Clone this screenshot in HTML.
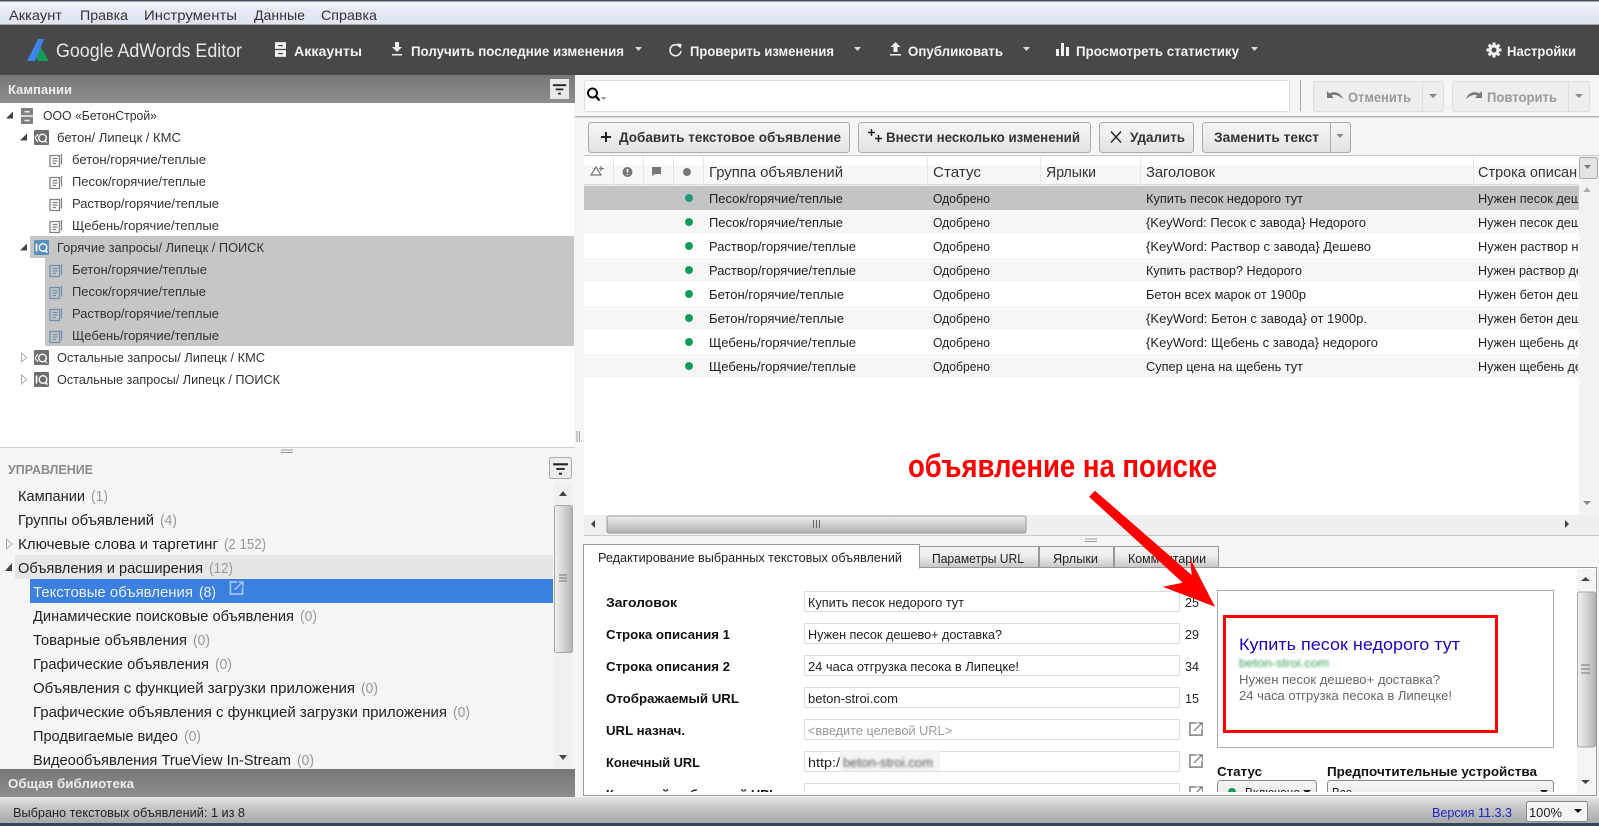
<!DOCTYPE html>
<html lang="ru"><head><meta charset="utf-8"><title>Google AdWords Editor</title>
<style>
html,body{margin:0;padding:0;background:#f5f5f5;overflow:hidden}
svg{display:block}
text{font-family:"Liberation Sans","DejaVu Sans",sans-serif;font-size:13px;fill:#222;white-space:pre}
.m{font-size:14px;fill:#333}
.w{font-size:13.5px;font-weight:bold;fill:#f2f2f2}
.h{font-size:13px;font-weight:bold;fill:#eee}
.l{font-size:15px;fill:#222}
.c{font-size:15px;fill:#999}
.b{font-size:13.5px;font-weight:bold;fill:#333}
.d{font-size:13.5px;font-weight:bold;fill:#999}
.gh{font-size:15px;fill:#333}
.f{font-size:13px;font-weight:bold;fill:#111}
.i{font-size:13px;fill:#222}
.tb{font-size:13px;fill:#333}
</style></head><body>
<svg xmlns="http://www.w3.org/2000/svg" width="1599" height="826" viewBox="0 0 1599 826">
<defs>
<linearGradient id="menu" x1="0" y1="0" x2="0" y2="1"><stop offset="0" stop-color="#fbfcfe"/><stop offset=".4" stop-color="#e4e9f5"/><stop offset="1" stop-color="#dfe4f2"/></linearGradient>
<linearGradient id="hd" x1="0" y1="0" x2="0" y2="1"><stop offset="0" stop-color="#777"/><stop offset="1" stop-color="#8e8e8e"/></linearGradient>
<linearGradient id="st" x1="0" y1="0" x2="0" y2="1"><stop offset="0" stop-color="#e6e6e6"/><stop offset=".45" stop-color="#c4c4c4"/><stop offset="1" stop-color="#a9a9a9"/></linearGradient>
<linearGradient id="btn" x1="0" y1="0" x2="0" y2="1"><stop offset="0" stop-color="#f6f6f6"/><stop offset="1" stop-color="#e2e2e2"/></linearGradient>
<linearGradient id="tab" x1="0" y1="0" x2="0" y2="1"><stop offset="0" stop-color="#f6f6f6"/><stop offset=".5" stop-color="#ebebeb"/><stop offset="1" stop-color="#c6c6c6"/></linearGradient>
<linearGradient id="thv" x1="0" y1="0" x2="1" y2="0"><stop offset="0" stop-color="#f2f2f2"/><stop offset="1" stop-color="#b4b4b4"/></linearGradient>
<linearGradient id="thh" x1="0" y1="0" x2="0" y2="1"><stop offset="0" stop-color="#f0f0f0"/><stop offset="1" stop-color="#b0b0b0"/></linearGradient>
<filter id="bl" x="-10%" y="-50%" width="120%" height="200%"><feGaussianBlur stdDeviation="1.3"/></filter>
<clipPath id="gridclip"><rect x="584" y="156" width="994" height="358"/></clipPath>
<clipPath id="panelclip"><rect x="584" y="569" width="1012" height="223"/></clipPath>
<symbol id="doc" viewBox="0 -1 15 15" overflow="visible"><path d="M1 2.500h9.500v11H1zM3.500 5.500h5M3.500 8h5M3.500 10.500h3.500" fill="none" stroke="currentColor" stroke-width="1.300"/><path d="M12.500 1v10.500" fill="none" stroke="currentColor" stroke-width="1.200"/></symbol>
<symbol id="campA" viewBox="0 0 15 15"><rect width="15" height="15" rx="1" fill="currentColor"/><circle cx="8.500" cy="8" r="3.800" fill="none" stroke="#fff" stroke-width="1.400"/><path d="M10.500 10.500l2.500 2.500M1 8l3-4M1 8l3 4" stroke="#fff" stroke-width="1.100" fill="none"/></symbol>
<symbol id="campS" viewBox="0 0 15 15"><rect width="15" height="15" rx="1" fill="currentColor"/><circle cx="9" cy="7.500" r="3.800" fill="none" stroke="#fff" stroke-width="1.400"/><path d="M11 10l2.500 2.500M2.500 3.500v8" stroke="#fff" stroke-width="1.600" fill="none"/></symbol>
<symbol id="cab" viewBox="0 0 12 16"><rect width="12" height="7.300" fill="currentColor"/><rect y="8.700" width="12" height="7.300" fill="currentColor"/><path d="M3.500 3h5v1.500h-5zM3.500 11.700h5v1.500h-5z" fill="#484848"/></symbol>
<symbol id="cab2" viewBox="0 0 12 16"><rect width="12" height="7.300" fill="currentColor"/><rect y="8.700" width="12" height="7.300" fill="currentColor"/><path d="M3.500 3h5v1.500h-5zM3.500 11.700h5v1.500h-5z" fill="#eee"/></symbol>
<symbol id="ext" viewBox="0 0 15 15"><path d="M8 1H1v13h13V7" fill="none" stroke="currentColor" stroke-width="1.700"/><path d="M5.500 9.500L13.500 1.500M9.500 1h5v5" fill="none" stroke="currentColor" stroke-width="1.500"/></symbol>
<symbol id="flt" viewBox="0 0 20 20"><path d="M3 5h14v2H3zM6 9.500h8v1.800H6zM8.500 14h3v1.800h-3z" fill="#222"/></symbol>
</defs>

<rect width="1599" height="826" fill="#f5f5f5"/>

<!-- title / menu -->
<rect width="1599" height="25" fill="url(#menu)"/>
<rect width="1599" height="1.500" fill="#3f4e5e"/>
<rect y="24" width="1599" height="1" fill="#a8a8a8"/>
<text class="m" x="9" y="20" textLength="53" lengthAdjust="spacingAndGlyphs">Аккаунт</text>
<text class="m" x="80" y="20" textLength="48" lengthAdjust="spacingAndGlyphs">Правка</text>
<text class="m" x="144" y="20" textLength="93" lengthAdjust="spacingAndGlyphs">Инструменты</text>
<text class="m" x="254" y="20" textLength="51" lengthAdjust="spacingAndGlyphs">Данные</text>
<text class="m" x="321" y="20" textLength="56" lengthAdjust="spacingAndGlyphs">Справка</text>

<!-- toolbar -->
<rect y="25" width="1599" height="50" fill="#484848"/>
<path d="M40 46l9 15H38l-3-7z" fill="#169c58"/><path d="M27 61L38 39h6L35 61z" fill="#3f83ee"/>
<text x="56" y="57" textLength="186" lengthAdjust="spacingAndGlyphs" style="font-size:19px;fill:#e6e6e6">Google AdWords Editor</text>
<use href="#cab" x="275" y="42" width="11" height="15" color="#f2f2f2"/>
<text class="w" x="294" y="56" textLength="68" lengthAdjust="spacingAndGlyphs">Аккаунты</text>
<path d="M395 42h4v5h3l-5 5-5-5h3zM392 54h10v1.500h-10z" fill="#f0f0f0"/>
<text class="w" x="411" y="56" textLength="213" lengthAdjust="spacingAndGlyphs">Получить последние изменения</text>
<path d="M635 47h7l-3.500 4z" fill="#ddd"/>
<path d="M680 47a5.500 5.500 0 1 0 1 4" fill="none" stroke="#f0f0f0" stroke-width="1.600"/><path d="M677 43.500l4.500 .5-.5 4.500z" fill="#f0f0f0"/>
<text class="w" x="690" y="56" textLength="144" lengthAdjust="spacingAndGlyphs">Проверить изменения</text>
<path d="M854 47h7l-3.500 4z" fill="#ddd"/>
<path d="M893.500 52h4v-5h3l-5-5-5 5h3zM890 54h11v1.500h-11z" fill="#f0f0f0"/>
<text class="w" x="908" y="56" textLength="95" lengthAdjust="spacingAndGlyphs">Опубликовать</text>
<path d="M1023 47h7l-3.500 4z" fill="#ddd"/>
<path d="M1056 49h3v7h-3zM1061 43h3v13h-3zM1066 47h3v9h-3z" fill="#f0f0f0"/>
<text class="w" x="1076" y="56" textLength="163" lengthAdjust="spacingAndGlyphs">Просмотреть статистику</text>
<path d="M1251 47h7l-3.500 4z" fill="#ddd"/>
<path d="M1494 42.500v15M1486.500 50h15M1488.700 44.700l10.600 10.600M1499.300 44.700l-10.600 10.600" stroke="#f2f2f2" stroke-width="3"/><circle cx="1494" cy="50" r="5.500" fill="#f2f2f2"/><circle cx="1494" cy="50" r="2.500" fill="#484848"/>
<text class="w" x="1507" y="56" textLength="69" lengthAdjust="spacingAndGlyphs">Настройки</text>

<!-- left: campaign tree -->
<rect y="75" width="575" height="28" fill="url(#hd)"/>
<text class="h" x="8" y="94" textLength="64" lengthAdjust="spacingAndGlyphs">Кампании</text>
<rect x="550" y="79" width="19" height="20" fill="#e8e8e8"/>
<use href="#flt" x="550" y="79" width="19" height="20"/>
<rect y="103" width="574" height="344" fill="#fff"/>
<rect y="447" width="575" height="1" fill="#ccc"/>
<rect x="30" y="236" width="544" height="22" fill="#c6c6c6"/>
<rect x="45" y="258" width="529" height="88" fill="#c6c6c6"/>

<path d="M13 111.500v7h-7z" fill="#444"/>
<use href="#cab2" x="21" y="108" width="12" height="16" color="#808080"/>
<text class="tb" x="43" y="120" textLength="114" lengthAdjust="spacingAndGlyphs">ООО «БетонСтрой»</text>
<path d="M27 133.500v7h-7z" fill="#444"/>
<use href="#campA" x="34" y="130" width="15" height="15" color="#6e6e6e"/>
<text class="tb" x="57" y="142" textLength="124" lengthAdjust="spacingAndGlyphs">бетон/ Липецк / КМС</text>
<use href="#doc" x="49" y="152" width="15" height="15" color="#808080"/>
<text class="tb" x="72" y="164" textLength="134" lengthAdjust="spacingAndGlyphs">бетон/горячие/теплые</text>
<use href="#doc" x="49" y="174" width="15" height="15" color="#808080"/>
<text class="tb" x="72" y="186" textLength="134" lengthAdjust="spacingAndGlyphs">Песок/горячие/теплые</text>
<use href="#doc" x="49" y="196" width="15" height="15" color="#808080"/>
<text class="tb" x="72" y="208" textLength="147" lengthAdjust="spacingAndGlyphs">Раствор/горячие/теплые</text>
<use href="#doc" x="49" y="218" width="15" height="15" color="#808080"/>
<text class="tb" x="72" y="230" textLength="147" lengthAdjust="spacingAndGlyphs">Щебень/горячие/теплые</text>
<path d="M27 243.500v7h-7z" fill="#444"/>
<use href="#campS" x="34" y="240" width="15" height="15" color="#5b8fbd"/>
<text class="tb" x="57" y="252" textLength="207" lengthAdjust="spacingAndGlyphs">Горячие запросы/ Липецк / ПОИСК</text>
<use href="#doc" x="49" y="262" width="15" height="15" color="#6f8fae"/>
<text class="tb" x="72" y="274" textLength="135" lengthAdjust="spacingAndGlyphs">Бетон/горячие/теплые</text>
<use href="#doc" x="49" y="284" width="15" height="15" color="#6f8fae"/>
<text class="tb" x="72" y="296" textLength="134" lengthAdjust="spacingAndGlyphs">Песок/горячие/теплые</text>
<use href="#doc" x="49" y="306" width="15" height="15" color="#6f8fae"/>
<text class="tb" x="72" y="318" textLength="147" lengthAdjust="spacingAndGlyphs">Раствор/горячие/теплые</text>
<use href="#doc" x="49" y="328" width="15" height="15" color="#6f8fae"/>
<text class="tb" x="72" y="340" textLength="147" lengthAdjust="spacingAndGlyphs">Щебень/горячие/теплые</text>
<path d="M21.500 353v9l5-4.500z" fill="#fff" stroke="#aaa"/>
<use href="#campA" x="34" y="350" width="15" height="15" color="#6e6e6e"/>
<text class="tb" x="57" y="362" textLength="208" lengthAdjust="spacingAndGlyphs">Остальные запросы/ Липецк / КМС</text>
<path d="M21.500 375v9l5-4.500z" fill="#fff" stroke="#aaa"/>
<use href="#campS" x="34" y="372" width="15" height="15" color="#6e6e6e"/>
<text class="tb" x="57" y="384" textLength="223" lengthAdjust="spacingAndGlyphs">Остальные запросы/ Липецк / ПОИСК</text>

<path d="M281 450h12M281 452.500h12" stroke="#999" stroke-width="1"/>
<path d="M577 431v11M579.500 431v11" stroke="#999" stroke-width="1"/>

<!-- left: manage -->
<text x="8" y="474" textLength="85" lengthAdjust="spacingAndGlyphs" style="font-size:13px;font-weight:bold;fill:#8a8a8a">УПРАВЛЕНИЕ</text>
<rect x="549.500" y="457.500" width="22" height="21" rx="2" fill="#ececec" stroke="#aaa"/>
<use href="#flt" x="550" y="458" width="21" height="21"/>
<rect x="15" y="555" width="538" height="24" fill="#e6e6e6"/>
<rect x="30" y="579" width="523" height="24" fill="#3b7fdf"/>
<text class="l" x="18" y="501" textLength="67" lengthAdjust="spacingAndGlyphs">Кампании</text><text class="c" x="91" y="501" textLength="17" lengthAdjust="spacingAndGlyphs">(1)</text>
<text class="l" x="18" y="525" textLength="136" lengthAdjust="spacingAndGlyphs">Группы объявлений</text><text class="c" x="160" y="525" textLength="17" lengthAdjust="spacingAndGlyphs">(4)</text>
<path d="M6.500 539v10l5.500-5z" fill="#fff" stroke="#aaa"/>
<text class="l" x="18" y="549" textLength="200" lengthAdjust="spacingAndGlyphs">Ключевые слова и таргетинг</text><text class="c" x="224" y="549" textLength="42" lengthAdjust="spacingAndGlyphs">(2 152)</text>
<path d="M12 563v8h-7z" fill="#444"/>
<text class="l" x="18" y="573" textLength="185" lengthAdjust="spacingAndGlyphs">Объявления и расширения</text><text class="c" x="209" y="573" textLength="24" lengthAdjust="spacingAndGlyphs">(12)</text>
<text class="l" x="33" y="597" textLength="160" lengthAdjust="spacingAndGlyphs" style="fill:#eaf1fb">Текстовые объявления</text><text class="l" x="199" y="597" textLength="17" lengthAdjust="spacingAndGlyphs" style="fill:#eaf1fb">(8)</text>
<use href="#ext" x="229" y="581" width="15" height="14" color="#a9c8f2"/>
<text class="l" x="33" y="621" textLength="261" lengthAdjust="spacingAndGlyphs">Динамические поисковые объявления</text><text class="c" x="300" y="621" textLength="17" lengthAdjust="spacingAndGlyphs">(0)</text>
<text class="l" x="33" y="645" textLength="154" lengthAdjust="spacingAndGlyphs">Товарные объявления</text><text class="c" x="193" y="645" textLength="17" lengthAdjust="spacingAndGlyphs">(0)</text>
<text class="l" x="33" y="669" textLength="176" lengthAdjust="spacingAndGlyphs">Графические объявления</text><text class="c" x="215" y="669" textLength="17" lengthAdjust="spacingAndGlyphs">(0)</text>
<text class="l" x="33" y="693" textLength="322" lengthAdjust="spacingAndGlyphs">Объявления с функцией загрузки приложения</text><text class="c" x="361" y="693" textLength="17" lengthAdjust="spacingAndGlyphs">(0)</text>
<text class="l" x="33" y="717" textLength="414" lengthAdjust="spacingAndGlyphs">Графические объявления с функцией загрузки приложения</text><text class="c" x="453" y="717" textLength="17" lengthAdjust="spacingAndGlyphs">(0)</text>
<text class="l" x="33" y="741" textLength="145" lengthAdjust="spacingAndGlyphs">Продвигаемые видео</text><text class="c" x="184" y="741" textLength="17" lengthAdjust="spacingAndGlyphs">(0)</text>
<text class="l" x="33" y="765" textLength="258" lengthAdjust="spacingAndGlyphs">Видеообъявления TrueView In-Stream</text><text class="c" x="297" y="765" textLength="17" lengthAdjust="spacingAndGlyphs">(0)</text>
<rect x="554" y="483" width="18" height="286" fill="#f0f0f0"/>
<path d="M559 496h8l-4-5z" fill="#444"/><path d="M559 755h8l-4 5z" fill="#444"/>
<rect x="554.500" y="505.500" width="18" height="147" rx="2" fill="url(#thv)" stroke="#a8a8a8"/>
<path d="M559 575h8M559 578h8M559 581h8" stroke="#777"/>
<rect y="769" width="575" height="28" fill="url(#hd)"/>
<text class="h" x="8" y="788" textLength="126" lengthAdjust="spacingAndGlyphs">Общая библиотека</text>

<!-- top-right controls -->
<rect x="584.500" y="80.500" width="705" height="31" rx="2" fill="#fff" stroke="#ddd"/>
<circle cx="592.500" cy="93" r="4.500" fill="none" stroke="#111" stroke-width="2"/><path d="M596 96.500l3.500 4" stroke="#111" stroke-width="2.400"/><path d="M600.500 97h6l-3 3z" fill="#999"/>
<rect x="1300" y="80" width="1" height="31" fill="#aaa"/>
<rect x="1313.500" y="81.500" width="130" height="30" rx="2" fill="#eee" stroke="#ddd"/><rect x="1422" y="81" width="1" height="30" fill="#ddd"/>
<path d="M1327 91v7h7l-2.500-2.500c3-1.500 7-.5 11.500 3.500-1.500-5.500-8-9-13.500-5.500z" fill="#777"/>
<text class="d" x="1348" y="102" textLength="63" lengthAdjust="spacingAndGlyphs">Отменить</text>
<path d="M1429 94h8l-4 4z" fill="#888"/>
<rect x="1452.500" y="81.500" width="137" height="30" rx="2" fill="#eee" stroke="#ddd"/><rect x="1568" y="81" width="1" height="30" fill="#ddd"/>
<path transform="translate(2809,0) scale(-1,1)" d="M1327 91v7h7l-2.500-2.500c3-1.500 7-.5 11.500 3.500-1.500-5.500-8-9-13.500-5.500z" fill="#777"/>
<text class="d" x="1487" y="102" textLength="70" lengthAdjust="spacingAndGlyphs">Повторить</text>
<path d="M1575 94h8l-4 4z" fill="#888"/>
<rect x="575" y="116" width="1024" height="1.500" fill="#b4b4b4"/>

<rect x="588.500" y="122.500" width="261" height="30" rx="3" fill="url(#btn)" stroke="#aaa"/>
<path d="M606 132v10M601 137h10" stroke="#222" stroke-width="2"/>
<text class="b" x="619" y="142" textLength="222" lengthAdjust="spacingAndGlyphs">Добавить текстовое объявление</text>
<rect x="858.500" y="122.500" width="232" height="30" rx="3" fill="url(#btn)" stroke="#aaa"/>
<path d="M871.500 129v7M868 132.500h7M878.500 135v7M875 138.500h7" stroke="#222" stroke-width="1.500"/>
<text class="b" x="886" y="142" textLength="194" lengthAdjust="spacingAndGlyphs">Внести несколько изменений</text>
<rect x="1099.500" y="122.500" width="94" height="30" rx="3" fill="url(#btn)" stroke="#aaa"/>
<path d="M1111 131.500l10 11M1121 131.500l-10 11" stroke="#222" stroke-width="1.400"/>
<text class="b" x="1130" y="142" textLength="55" lengthAdjust="spacingAndGlyphs">Удалить</text>
<rect x="1202.500" y="122.500" width="148" height="30" rx="3" fill="url(#btn)" stroke="#aaa"/><rect x="1330" y="123" width="1" height="29" fill="#aaa"/>
<text class="b" x="1214" y="142" textLength="105" lengthAdjust="spacingAndGlyphs">Заменить текст</text>
<path d="M1336.500 134h7l-3.500 4z" fill="#888"/>

<!-- grid -->
<rect x="584" y="155" width="1015" height="1" fill="#c8c8c8"/>
<rect x="584" y="156" width="995" height="359" fill="#fff"/>
<rect x="584" y="165" width="995" height="20" fill="#f7f7f7"/>
<rect x="584" y="184" width="995" height="1.500" fill="#ddd"/>
<path d="M613.500 156v29M643.500 156v29M673.500 156v29M703.500 156v29M927.500 156v29M1040.500 156v29M1140.500 156v29M1473.500 156v29" stroke="#e6e6e6"/>
<rect x="584" y="186" width="995" height="24" fill="#c4c4c4"/>
<rect x="584" y="210" width="995" height="24" fill="#f6f6f6"/>
<rect x="584" y="258" width="995" height="24" fill="#f6f6f6"/>
<rect x="584" y="306" width="995" height="24" fill="#f6f6f6"/>
<rect x="584" y="354" width="995" height="24" fill="#f6f6f6"/>
<path d="M591 175l5-8 5 8zM601 166v5M599 168.500h5" fill="none" stroke="#777" stroke-width="1.200"/>
<circle cx="627.500" cy="172" r="5" fill="#777"/><path d="M627.500 169v3.500M627.500 174v1" stroke="#fff" stroke-width="1.500"/>
<path d="M652 167h9v7h-6l-3 2z" fill="#777"/>
<circle cx="687" cy="172" r="4" fill="#777"/>
<g clip-path="url(#gridclip)">
<text class="gh" x="709" y="177" textLength="134" lengthAdjust="spacingAndGlyphs">Группа объявлений</text>
<text class="gh" x="933" y="177" textLength="48" lengthAdjust="spacingAndGlyphs">Статус</text>
<text class="gh" x="1046" y="177" textLength="50" lengthAdjust="spacingAndGlyphs">Ярлыки</text>
<text class="gh" x="1146" y="177" textLength="69" lengthAdjust="spacingAndGlyphs">Заголовок</text>
<text class="gh" x="1478" y="177" textLength="115" lengthAdjust="spacingAndGlyphs">Строка описания</text>

<circle cx="689" cy="198" r="4" fill="#1d9a7c"/><circle cx="689" cy="222" r="4" fill="#149c5a"/><circle cx="689" cy="246" r="4" fill="#149c5a"/><circle cx="689" cy="270" r="4" fill="#149c5a"/><circle cx="689" cy="294" r="4" fill="#149c5a"/><circle cx="689" cy="318" r="4" fill="#149c5a"/><circle cx="689" cy="342" r="4" fill="#149c5a"/><circle cx="689" cy="366" r="4" fill="#149c5a"/>

<text x="709" y="203" textLength="134" lengthAdjust="spacingAndGlyphs">Песок/горячие/теплые</text><text x="933" y="203" textLength="57" lengthAdjust="spacingAndGlyphs">Одобрено</text><text x="1146" y="203" textLength="157" lengthAdjust="spacingAndGlyphs">Купить песок недорого тут</text><text x="1478" y="203" textLength="195" lengthAdjust="spacingAndGlyphs">Нужен песок дешево+ доставка?</text>
<text x="709" y="227" textLength="134" lengthAdjust="spacingAndGlyphs">Песок/горячие/теплые</text><text x="933" y="227" textLength="57" lengthAdjust="spacingAndGlyphs">Одобрено</text><text x="1146" y="227" textLength="220" lengthAdjust="spacingAndGlyphs">{KeyWord: Песок с завода} Недорого</text><text x="1478" y="227" textLength="195" lengthAdjust="spacingAndGlyphs">Нужен песок дешево+ доставка?</text>
<text x="709" y="251" textLength="147" lengthAdjust="spacingAndGlyphs">Раствор/горячие/теплые</text><text x="933" y="251" textLength="57" lengthAdjust="spacingAndGlyphs">Одобрено</text><text x="1146" y="251" textLength="225" lengthAdjust="spacingAndGlyphs">{KeyWord: Раствор с завода} Дешево</text><text x="1478" y="251" textLength="155" lengthAdjust="spacingAndGlyphs">Нужен раствор недорого?</text>
<text x="709" y="275" textLength="147" lengthAdjust="spacingAndGlyphs">Раствор/горячие/теплые</text><text x="933" y="275" textLength="57" lengthAdjust="spacingAndGlyphs">Одобрено</text><text x="1146" y="275" textLength="156" lengthAdjust="spacingAndGlyphs">Купить раствор? Недорого</text><text x="1478" y="275" textLength="205" lengthAdjust="spacingAndGlyphs">Нужен раствор дешево+ доставка?</text>
<text x="709" y="299" textLength="135" lengthAdjust="spacingAndGlyphs">Бетон/горячие/теплые</text><text x="933" y="299" textLength="57" lengthAdjust="spacingAndGlyphs">Одобрено</text><text x="1146" y="299" textLength="160" lengthAdjust="spacingAndGlyphs">Бетон всех марок от 1900р</text><text x="1478" y="299" textLength="195" lengthAdjust="spacingAndGlyphs">Нужен бетон дешево+ доставка?</text>
<text x="709" y="323" textLength="135" lengthAdjust="spacingAndGlyphs">Бетон/горячие/теплые</text><text x="933" y="323" textLength="57" lengthAdjust="spacingAndGlyphs">Одобрено</text><text x="1146" y="323" textLength="221" lengthAdjust="spacingAndGlyphs">{KeyWord: Бетон с завода} от 1900р.</text><text x="1478" y="323" textLength="195" lengthAdjust="spacingAndGlyphs">Нужен бетон дешево+ доставка?</text>
<text x="709" y="347" textLength="147" lengthAdjust="spacingAndGlyphs">Щебень/горячие/теплые</text><text x="933" y="347" textLength="57" lengthAdjust="spacingAndGlyphs">Одобрено</text><text x="1146" y="347" textLength="232" lengthAdjust="spacingAndGlyphs">{KeyWord: Щебень с завода} недорого</text><text x="1478" y="347" textLength="205" lengthAdjust="spacingAndGlyphs">Нужен щебень дешево+ доставка?</text>
<text x="709" y="371" textLength="147" lengthAdjust="spacingAndGlyphs">Щебень/горячие/теплые</text><text x="933" y="371" textLength="57" lengthAdjust="spacingAndGlyphs">Одобрено</text><text x="1146" y="371" textLength="157" lengthAdjust="spacingAndGlyphs">Супер цена на щебень тут</text><text x="1478" y="371" textLength="205" lengthAdjust="spacingAndGlyphs">Нужен щебень дешево+ доставка?</text>
</g>
<rect x="1579" y="156" width="20" height="359" fill="#f2f2f2"/>
<rect x="1579.500" y="157.500" width="18" height="21" rx="2" fill="#e4e4e4" stroke="#aaa"/>
<path d="M1584 165h7l-3.500 4z" fill="#777"/>
<path d="M1583.500 192h7l-3.500-5z" fill="#aaa"/>
<path d="M1583 501h8l-4 4z" fill="#888"/>
<rect x="584" y="515" width="1015" height="20" fill="#efefef"/>
<rect x="584" y="535" width="1015" height="1" fill="#ccc"/>
<path d="M595 520v8l-4-4z" fill="#444"/>
<rect x="607" y="516" width="419" height="17" rx="2" fill="url(#thh)" stroke="#999"/>
<path d="M813.500 520v8M816.500 520v8M819.500 520v8" stroke="#666"/>
<path d="M1565 520v8l4-4z" fill="#444"/>
<path d="M1085 539h12M1085 541.500h12" stroke="#999"/>

<!-- tabs + editor -->
<rect x="583.500" y="567.500" width="1013" height="228" fill="#fff" stroke="#999"/>
<rect x="919.500" y="546.500" width="119" height="21" fill="url(#tab)" stroke="#999"/>
<rect x="1039.500" y="546.500" width="74" height="21" fill="url(#tab)" stroke="#999"/>
<rect x="1114.500" y="546.500" width="104" height="21" fill="url(#tab)" stroke="#999"/>
<path d="M583.500 568v-23.500h336v24" fill="#fff" stroke="#999"/>
<rect x="584" y="566" width="335" height="3" fill="#fff"/>
<text class="i" x="598" y="562" textLength="304" lengthAdjust="spacingAndGlyphs">Редактирование выбранных текстовых объявлений</text>
<text class="i" x="932" y="563" textLength="92" lengthAdjust="spacingAndGlyphs">Параметры URL</text>
<text class="i" x="1053" y="563" textLength="45" lengthAdjust="spacingAndGlyphs">Ярлыки</text>
<text class="i" x="1128" y="563" textLength="78" lengthAdjust="spacingAndGlyphs">Комментарии</text>

<g clip-path="url(#panelclip)">
<text class="f" x="606" y="607" textLength="71" lengthAdjust="spacingAndGlyphs">Заголовок</text>
<text class="f" x="606" y="639" textLength="124" lengthAdjust="spacingAndGlyphs">Строка описания 1</text>
<text class="f" x="606" y="671" textLength="124" lengthAdjust="spacingAndGlyphs">Строка описания 2</text>
<text class="f" x="606" y="703" textLength="133" lengthAdjust="spacingAndGlyphs">Отображаемый URL</text>
<text class="f" x="606" y="735" textLength="79" lengthAdjust="spacingAndGlyphs">URL назнач.</text>
<text class="f" x="606" y="767" textLength="94" lengthAdjust="spacingAndGlyphs">Конечный URL</text>
<text class="f" x="606" y="799" textLength="171" lengthAdjust="spacingAndGlyphs">Конечный мобильный URL</text>
<g fill="#fff" stroke="#ddd">
<rect x="804.500" y="591.500" width="375" height="20" rx="1"/><rect x="804.500" y="623.500" width="375" height="20" rx="1"/><rect x="804.500" y="655.500" width="375" height="20" rx="1"/><rect x="804.500" y="687.500" width="375" height="20" rx="1"/><rect x="804.500" y="719.500" width="375" height="20" rx="1"/><rect x="804.500" y="751.500" width="375" height="20" rx="1"/><rect x="804.500" y="783.500" width="375" height="20" rx="1"/>
</g>
<text class="i" x="808" y="607" textLength="156" lengthAdjust="spacingAndGlyphs">Купить песок недорого тут</text>
<text class="i" x="808" y="639" textLength="194" lengthAdjust="spacingAndGlyphs">Нужен песок дешево+ доставка?</text>
<text class="i" x="808" y="671" textLength="211" lengthAdjust="spacingAndGlyphs">24 часа отгрузка песока в Липецке!</text>
<text class="i" x="808" y="703" textLength="90" lengthAdjust="spacingAndGlyphs">beton-stroi.com</text>
<text class="i" x="808" y="735" textLength="144" lengthAdjust="spacingAndGlyphs" style="fill:#999">&lt;введите целевой URL&gt;</text>
<text class="i" x="808" y="767" textLength="32" lengthAdjust="spacingAndGlyphs">http:/</text>
<rect x="840" y="750" width="100" height="21" fill="#f4f4f4"/>
<text class="i" x="843" y="767" textLength="90" lengthAdjust="spacingAndGlyphs" style="fill:#555" filter="url(#bl)">beton-stroi.com</text>
<text class="i" x="1185" y="607" textLength="14" lengthAdjust="spacingAndGlyphs">25</text>
<text class="i" x="1185" y="639" textLength="14" lengthAdjust="spacingAndGlyphs">29</text>
<text class="i" x="1185" y="671" textLength="14" lengthAdjust="spacingAndGlyphs">34</text>
<text class="i" x="1185" y="703" textLength="14" lengthAdjust="spacingAndGlyphs">15</text>
<use href="#ext" x="1189" y="722" width="14" height="14" color="#888"/>
<use href="#ext" x="1189" y="754" width="14" height="14" color="#888"/>
<use href="#ext" x="1189" y="786" width="14" height="14" color="#888"/>

<rect x="1217.500" y="590.500" width="336" height="157" fill="#fff" stroke="#aaa"/>
<rect x="1224.500" y="616.500" width="272" height="115" fill="#fff" stroke="#f00" stroke-width="3"/>
<text x="1239" y="650" textLength="221" lengthAdjust="spacingAndGlyphs" style="font-size:17px;fill:#2200c1">Купить песок недорого тут</text>
<text x="1239" y="667" textLength="90" lengthAdjust="spacingAndGlyphs" style="font-size:12px;fill:#2f9a5a" filter="url(#bl)">beton-stroi.com</text>
<text x="1239" y="684" textLength="201" lengthAdjust="spacingAndGlyphs" style="font-size:13px;fill:#666">Нужен песок дешево+ доставка?</text>
<text x="1239" y="700" textLength="213" lengthAdjust="spacingAndGlyphs" style="font-size:13px;fill:#666">24 часа отгрузка песока в Липецке!</text>
<text class="f" x="1217" y="776" textLength="45" lengthAdjust="spacingAndGlyphs">Статус</text>
<text class="f" x="1327" y="776" textLength="210" lengthAdjust="spacingAndGlyphs">Предпочтительные устройства</text>
<rect x="1217.500" y="780.500" width="99" height="24" rx="3" fill="url(#btn)" stroke="#888"/>
<rect x="1327.500" y="780.500" width="226" height="24" rx="3" fill="url(#btn)" stroke="#888"/>
<circle cx="1232" cy="792" r="4" fill="#149c5a"/>
<text class="i" x="1245" y="797" textLength="55" lengthAdjust="spacingAndGlyphs">Включено</text>
<path d="M1303 790h8l-4 4z" fill="#222"/>
<text class="i" x="1332" y="797" textLength="20" lengthAdjust="spacingAndGlyphs">Все</text>
<path d="M1540 790h8l-4 4z" fill="#222"/>
</g>
<rect x="1577" y="569" width="19" height="226" fill="#f4f4f4"/>
<path d="M1581 581h9l-4.500-4z" fill="#444"/><path d="M1581 780h9l-4.500 4z" fill="#444"/>
<rect x="1577.500" y="592" width="18" height="155" rx="2" fill="url(#thv)" stroke="#aaa"/>
<path d="M1581 665h9M1581 669h9M1581 673h9" stroke="#777"/>

<!-- status bar -->
<rect y="797" width="1599" height="26" fill="url(#st)"/>
<rect y="823" width="1599" height="3" fill="#36475a"/>
<text class="i" x="13" y="817" textLength="232" lengthAdjust="spacingAndGlyphs">Выбрано текстовых объявлений: 1 из 8</text>
<text x="1432" y="817" textLength="80" lengthAdjust="spacingAndGlyphs" style="fill:#2323c8">Версия 11.3.3</text>
<rect x="1526.500" y="801.500" width="61" height="20" rx="2" fill="#f4f4f4" stroke="#888"/>
<text class="i" x="1529" y="817" textLength="33" lengthAdjust="spacingAndGlyphs">100%</text>
<path d="M1574 809h8l-4 4z" fill="#111"/>

<!-- annotation -->
<text x="908" y="477" textLength="309" lengthAdjust="spacingAndGlyphs" style="font-size:32px;font-weight:bold;fill:#f00">объявление на поиске</text>
<path d="M1095 490.700L1191.700 575L1190 558.300L1215 606.700L1162.700 586.700L1182.700 582.700L1089 496.700z" fill="#f00"/>
</svg>
</body></html>
